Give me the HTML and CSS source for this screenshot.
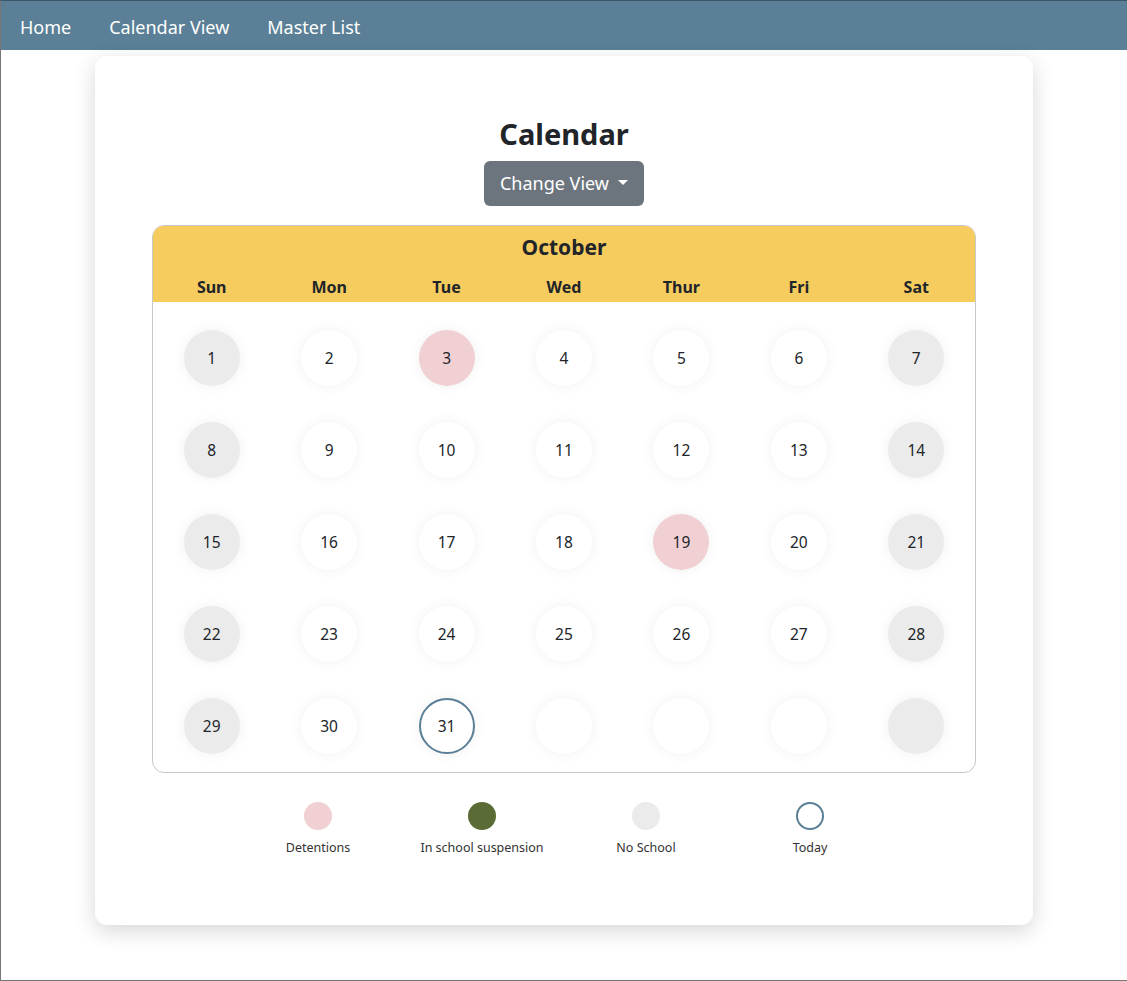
FILE: index.html
```html
<!DOCTYPE html>
<html lang="en">
<head>
<meta charset="utf-8">
<title>Calendar</title>
<link rel="stylesheet" href="styles.css">
</head>
<body>
<nav class="navbar">
  <a class="nav-link" href="#">Home</a>
  <a class="nav-link" href="#">Calendar View</a>
  <a class="nav-link" href="#">Master List</a>
</nav>
<main class="card">
  <h2 class="title">Calendar</h2>
  <button class="btn-view">Change View <span class="caret"></span></button>
  <section class="calendar">
    <header class="cal-head">
      <div class="month">October</div>
      <div class="weekdays">
        <span>Sun</span><span>Mon</span><span>Tue</span><span>Wed</span><span>Thur</span><span>Fri</span><span>Sat</span>
      </div>
    </header>
    <div class="days">
      <div class="cell"><span class="day off">1</span></div>
      <div class="cell"><span class="day">2</span></div>
      <div class="cell"><span class="day det">3</span></div>
      <div class="cell"><span class="day">4</span></div>
      <div class="cell"><span class="day">5</span></div>
      <div class="cell"><span class="day">6</span></div>
      <div class="cell"><span class="day off">7</span></div>

      <div class="cell"><span class="day off">8</span></div>
      <div class="cell"><span class="day">9</span></div>
      <div class="cell"><span class="day">10</span></div>
      <div class="cell"><span class="day">11</span></div>
      <div class="cell"><span class="day">12</span></div>
      <div class="cell"><span class="day">13</span></div>
      <div class="cell"><span class="day off">14</span></div>

      <div class="cell"><span class="day off">15</span></div>
      <div class="cell"><span class="day">16</span></div>
      <div class="cell"><span class="day">17</span></div>
      <div class="cell"><span class="day">18</span></div>
      <div class="cell"><span class="day det">19</span></div>
      <div class="cell"><span class="day">20</span></div>
      <div class="cell"><span class="day off">21</span></div>

      <div class="cell"><span class="day off">22</span></div>
      <div class="cell"><span class="day">23</span></div>
      <div class="cell"><span class="day">24</span></div>
      <div class="cell"><span class="day">25</span></div>
      <div class="cell"><span class="day">26</span></div>
      <div class="cell"><span class="day">27</span></div>
      <div class="cell"><span class="day off">28</span></div>

      <div class="cell"><span class="day off">29</span></div>
      <div class="cell"><span class="day">30</span></div>
      <div class="cell"><span class="day today">31</span></div>
      <div class="cell"><span class="day"></span></div>
      <div class="cell"><span class="day"></span></div>
      <div class="cell"><span class="day"></span></div>
      <div class="cell"><span class="day off"></span></div>
    </div>
  </section>
  <div class="legend">
    <div class="legend-item"><span class="dot det"></span><span class="label">Detentions</span></div>
    <div class="legend-item"><span class="dot iss"></span><span class="label">In school suspension</span></div>
    <div class="legend-item"><span class="dot off"></span><span class="label">No School</span></div>
    <div class="legend-item"><span class="dot today"></span><span class="label">Today</span></div>
  </div>
</main>
</body>
</html>
```
FILE: styles.css
```css
* { box-sizing: border-box; }
html, body { height: 100%; }
body {
  margin: 0;
  font-family: "Noto Sans", "Open Sans", sans-serif;
  color: #212529;
  background: #fff;
  border-left: 1px solid #777;
  border-bottom: 1px solid #777;
  border-top: 1px solid #3a5566;
  overflow: hidden;
}
.navbar {
  display: flex;
  align-items: center;
  height: 49px;
  background: #5a7f96;
  padding-left: 0;
}
.nav-link {
  color: #fff;
  text-decoration: none;
  font-size: 18px;
  padding: 3px 19px 0;
  line-height: 46px;
}
.card {
  width: 938px;
  margin: 6px auto 0;
  background: #fff;
  border-radius: 12px;
  box-shadow: 0 6px 22px rgba(0, 0, 0, 0.16);
  padding: 59px 57px 68px;
  display: flex;
  flex-direction: column;
  align-items: center;
}
.title {
  margin: 0 0 8px;
  font-size: 29px;
  font-weight: 700;
  line-height: 38px;
  color: #212529;
}
.btn-view {
  font-family: inherit;
  font-size: 18px;
  line-height: 27px;
  color: #fff;
  background: #6c757d;
  border: 0;
  border-radius: 6px;
  padding: 9px 15px;
  width: 160px;
  height: 45px;
  display: flex;
  align-items: center;
  justify-content: center;
  gap: 9px;
}
.caret {
  width: 0;
  height: 0;
  border-left: 5px solid transparent;
  border-right: 5px solid transparent;
  border-top: 5px solid #fff;
  margin-top: -2px;
}
.calendar {
  margin-top: 19px;
  width: 824px;
  border: 1px solid #c8c8c8;
  border-radius: 12px;
  overflow: hidden;
}
.cal-head {
  background: #f7cc5f;
  height: 76px;
  padding-top: 6px;
}
.month {
  text-align: center;
  font-size: 21px;
  font-weight: 700;
  line-height: 30px;
  color: #212529;
}
.weekdays {
  display: grid;
  grid-template-columns: repeat(7, 1fr);
  margin-top: 14px;
}
.weekdays span {
  text-align: center;
  font-size: 16px;
  font-weight: 700;
  line-height: 22px;
  color: #212529;
}
.days {
  display: grid;
  grid-template-columns: repeat(7, 1fr);
  padding: 10px 0 0;
}
.cell {
  display: flex;
  justify-content: center;
  padding: 18px 0;
}
.day {
  width: 56px;
  height: 56px;
  border-radius: 50%;
  background: #fff;
  box-shadow: 0 0 14px rgba(0, 0, 0, 0.06);
  display: flex;
  align-items: center;
  justify-content: center;
  font-size: 15.5px;
  color: #212529;
}
.day.off { background: #ebebeb; }
.day.det { background: #f0d0d2; }
.day.today { border: 2px solid #5a7f96; }
.legend {
  margin-top: 29px;
  display: grid;
  grid-template-columns: repeat(4, 164px);
}
.legend-item {
  display: flex;
  flex-direction: column;
  align-items: center;
}
.dot {
  width: 28px;
  height: 28px;
  border-radius: 50%;
}
.dot.det { background: #f0d0d2; }
.dot.iss { background: #5a6b35; }
.dot.off { background: #ebebeb; }
.dot.today { border: 2px solid #5a7f96; }
.label {
  margin-top: 9px;
  font-size: 12.5px;
  line-height: 18px;
  color: #333;
}
```
